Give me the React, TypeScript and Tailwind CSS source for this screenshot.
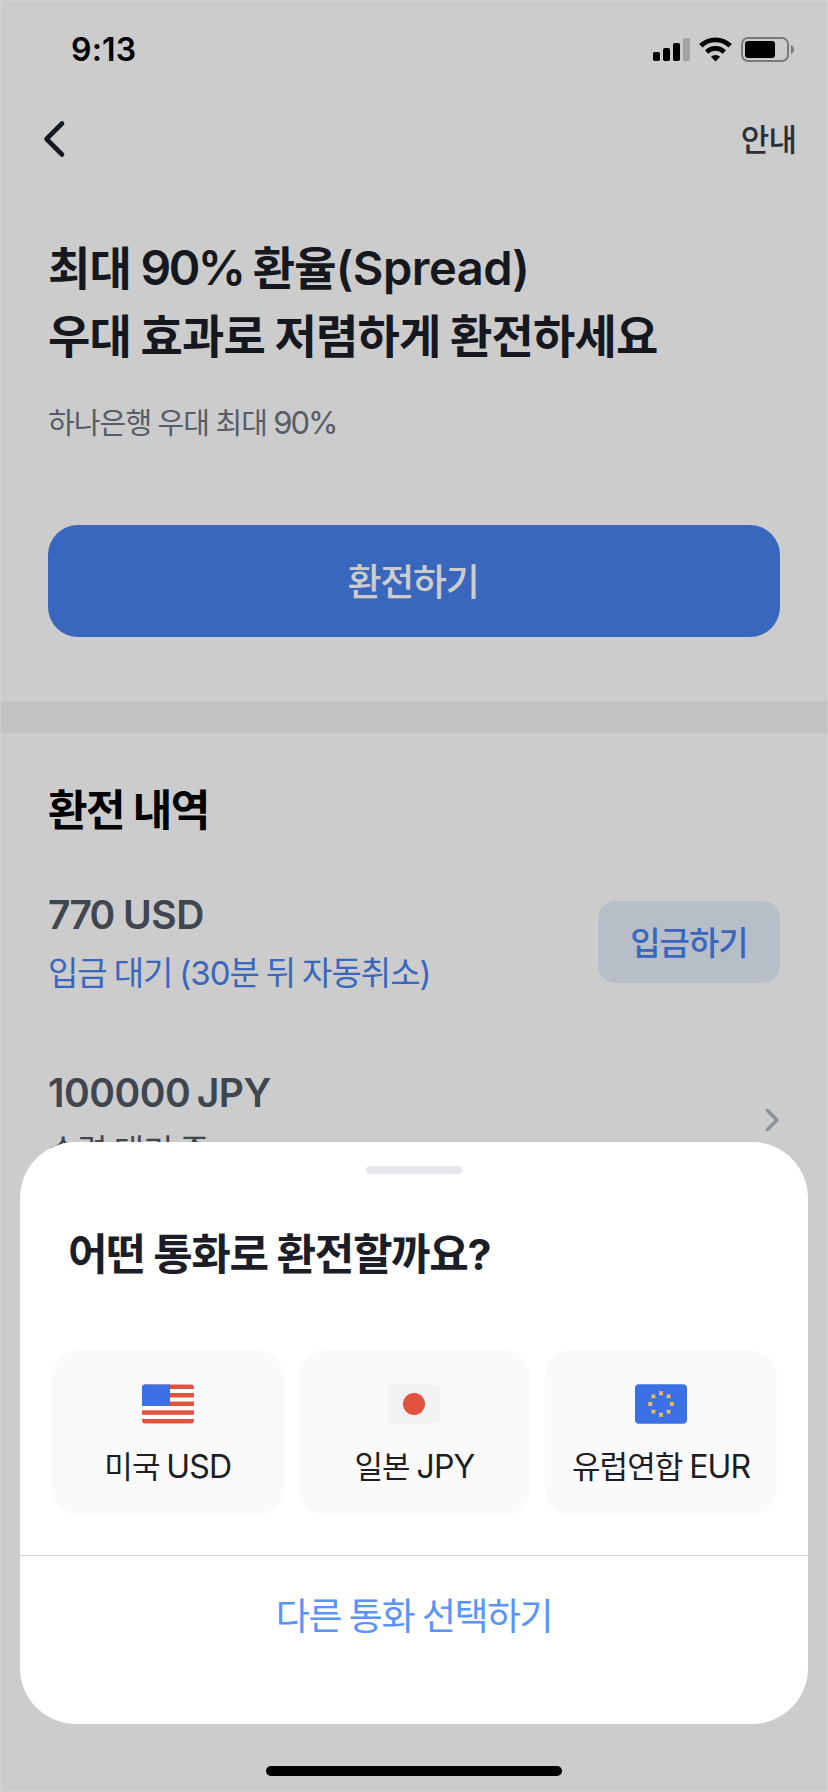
import type { ReactNode } from 'react';

function SignalIcon() {
  return (
    <svg width="37" height="23" viewBox="0 0 37 23">
      <rect x="0" y="14" width="7" height="9" rx="1.8" fill="#000" />
      <rect x="10" y="10" width="7" height="13" rx="1.8" fill="#000" />
      <rect x="20" y="5" width="7" height="18" rx="1.8" fill="#000" />
      <rect x="30" y="0" width="7" height="23" rx="1.8" fill="#ccc" />
    </svg>
  );
}

function WifiIcon() {
  return (
    <svg width="33" height="25" viewBox="0 0 33 25" fill="none">
      <path d="M1.8 8.8a21 21 0 0 1 29.4 0" stroke="#000" strokeWidth="4.8" />
      <path d="M7.6 15a12.8 12.8 0 0 1 17.8 0" stroke="#000" strokeWidth="4.6" />
      <path d="M16.5 24.6l-4.6-4.9a6.8 6.8 0 0 1 9.2 0z" fill="#000" />
    </svg>
  );
}

function BatteryIcon() {
  return (
    <svg width="54" height="25" viewBox="0 0 54 25">
      <rect
        x="1"
        y="1"
        width="46"
        height="23"
        rx="6"
        fill="none"
        stroke="#999"
        strokeWidth="2"
      />
      <rect x="4" y="4" width="30" height="17" rx="3" fill="#000" />
      <path d="M50 8v9c1.8-.7 3-2.4 3-4.5s-1.2-3.8-3-4.5z" fill="#999" />
    </svg>
  );
}

function UsFlag() {
  return (
    <svg width="52" height="40" viewBox="0 0 52 40">
      <clipPath id="us-flag">
        <rect width="52" height="40" rx="4" />
      </clipPath>
      <g clipPath="url(#us-flag)">
        <rect width="52" height="40" fill="#fff" />
        {[0.5, 9, 17.5, 26.3, 35].map((y) => (
          <rect key={y} y={y} width="52" height="4.5" fill="#e25241" />
        ))}
        <rect y="0.5" width="28" height="21.5" fill="#3b70e6" />
      </g>
    </svg>
  );
}

function JapanFlag() {
  return (
    <svg width="52" height="40" viewBox="0 0 52 40">
      <rect y="0.7" width="52" height="38.6" rx="4" fill="#f2f2f4" />
      <circle cx="26" cy="20" r="11" fill="#e25241" />
    </svg>
  );
}

const STARS = [
  [26, 9.2],
  [33.6, 12.4],
  [36.8, 20],
  [33.6, 27.6],
  [26, 30.8],
  [18.4, 27.6],
  [15.2, 20],
  [18.4, 12.4],
];

function EuFlag() {
  return (
    <svg width="52" height="40" viewBox="0 0 52 40">
      <rect y="0.3" width="52" height="39.4" rx="4" fill="#3b70e6" />
      {STARS.map(([x, y]) => (
        <path
          key={`${x}-${y}`}
          transform={`translate(${x} ${y})`}
          d="M-2.2-2.2L0-1.7 2.2-2.2 1.7 0 2.2 2.2 0 1.7-2.2 2.2-1.7 0z"
          fill="#f2c04e"
        />
      ))}
    </svg>
  );
}

interface CurrencyCardProps {
  flag: ReactNode;
  country: string;
  code: string;
}

function CurrencyCard({ flag, country, code }: CurrencyCardProps) {
  return (
    <button
      type="button"
      className="h-[165px] rounded-[26px] bg-[#fafafa] flex flex-col items-center pt-[34px]"
    >
      {flag}
      <span className="mt-[23px] text-[31px] leading-10 tracking-[-0.03em] [word-spacing:-1px] whitespace-nowrap text-[#1b1e26]">
        {country}{' '}
        <span className="text-[32px] tracking-[-0.025em]">{code}</span>
      </span>
    </button>
  );
}

function CurrencySheet() {
  return (
    <section className="absolute left-5 top-[1142px] w-[788px] h-[582px] rounded-[56px] bg-white flex flex-col">
      <div className="mt-6 w-24 h-2 rounded-full bg-[#e5e6eb] self-center" />
      <h2 className="mt-[50px] pl-12 text-[43px] leading-[60px] font-bold tracking-[-0.032em] text-[#1b1e26]">
        어떤 통화로 환전할까요?
      </h2>
      <div className="mt-[66px] pl-8 pr-[31px] grid grid-cols-3 gap-[15px]">
        <CurrencyCard flag={<UsFlag />} country="미국" code="USD" />
        <CurrencyCard flag={<JapanFlag />} country="일본" code="JPY" />
        <CurrencyCard flag={<EuFlag />} country="유럽연합" code="EUR" />
      </div>
      <div className="mt-10 h-px bg-[#d6d7d9]" />
      <button
        type="button"
        className="mt-[31px] text-[37px] leading-[60px] tracking-[-0.04em] [word-spacing:-1px] text-[#5a93fa]"
      >
        다른 통화 선택하기
      </button>
    </section>
  );
}

export default function App() {
  return (
    <div className="relative w-[828px] h-[1792px] overflow-hidden bg-white font-['Inter','Noto_Sans_CJK_KR',sans-serif]">
      <header className="h-[99px] pl-[71px] pr-[33px] flex items-center justify-between">
        <span className="text-[32px] leading-10 font-semibold tracking-[0.005em] text-black">
          9:13
        </span>
        <div className="flex items-center gap-[9px]">
          <SignalIcon />
          <WifiIcon />
          <BatteryIcon />
        </div>
      </header>

      <nav className="h-20 pl-[42px] pr-8 flex items-center justify-between">
        <svg width="24" height="38" viewBox="0 0 24 38" fill="none">
          <path
            d="M20 3.5L4.5 19 20 34.5"
            stroke="#1b1e26"
            strokeWidth="4.6"
            strokeLinecap="round"
            strokeLinejoin="round"
          />
        </svg>
        <span className="pt-[2px] text-[31px] leading-10 font-medium tracking-[-0.03em] text-[#353d4a]">
          안내
        </span>
      </nav>

      <main className="px-12">
        <h1 className="mt-[55px] text-[46px] leading-[68px] font-bold tracking-[-0.018em] [word-spacing:-0.5px] text-[#1b1e26]">
          최대{' '}
          <span className="font-semibold text-[48px] tracking-[-0.055em]">
            90%
          </span>{' '}
          환율
          <span className="font-semibold text-[47px] tracking-[-0.01em]">
            (Spread)
          </span>
          <br />
          우대 효과로 저렴하게 환전하세요
        </h1>
        <p className="mt-[33px] text-[29px] leading-10 tracking-[-0.03em] [word-spacing:-1px] text-[#6c7582]">
          하나은행 우대 최대{' '}
          <span className="text-[31px] tracking-[-0.065em]">90%</span>
        </p>
        <button
          type="button"
          className="mt-[81px] w-full h-28 rounded-[30px] bg-[#4881ee] pt-[3px] pr-[2px] text-[37px] font-medium tracking-[-0.035em] text-white"
        >
          환전하기
        </button>
      </main>

      <div className="mt-16 h-8 bg-[#f2f3f5]" />

      <section className="px-12">
        <h2 className="mt-[47px] text-[43px] leading-[60px] font-bold tracking-[-0.035em] text-black">
          환전 내역
        </h2>
        <div className="mt-[46px] flex items-start justify-between">
          <div className="leading-[58px]">
            <p className="text-[39px] font-semibold tracking-[-0.01em] text-[#505864]">
              <span className="tracking-[-0.045em]">770</span> USD
            </p>
            <p className="text-[33px] tracking-[-0.03em] [word-spacing:-1.4px] text-[#4881ee]">
              입금 대기 (30분 뒤 자동취소)
            </p>
          </div>
          <button
            type="button"
            className="mt-[15px] w-[182px] h-[82px] rounded-[18px] bg-[#e5eefb] pt-[3px] text-[33px] font-medium tracking-[-0.03em] text-[#4881ee]"
          >
            입금하기
          </button>
        </div>
        <div className="mt-[62px] flex items-start justify-between">
          <div className="leading-[58px]">
            <p className="text-[39px] font-semibold tracking-[-0.012em] [word-spacing:-3px] text-[#505864]">
              100000 JPY
            </p>
            <p className="text-[33px] tracking-[-0.03em] [word-spacing:-1.4px] text-[#505864]">
              수령 대기 중
            </p>
          </div>
          <svg
            className="mt-11"
            width="16"
            height="24"
            viewBox="0 0 16 24"
            fill="none"
          >
            <path
              d="M3.5 2.5L13 12 3.5 21.5"
              stroke="#b0b8c1"
              strokeWidth="3.6"
              strokeLinecap="round"
              strokeLinejoin="round"
            />
          </svg>
        </div>
      </section>

      {/* dim layer */}
      <div className="absolute inset-0 border border-white/15 bg-black/20" />
      <CurrencySheet />
      <div className="absolute left-[266px] top-[1766px] w-[296px] h-[10px] rounded-full bg-black" />
    </div>
  );
}
